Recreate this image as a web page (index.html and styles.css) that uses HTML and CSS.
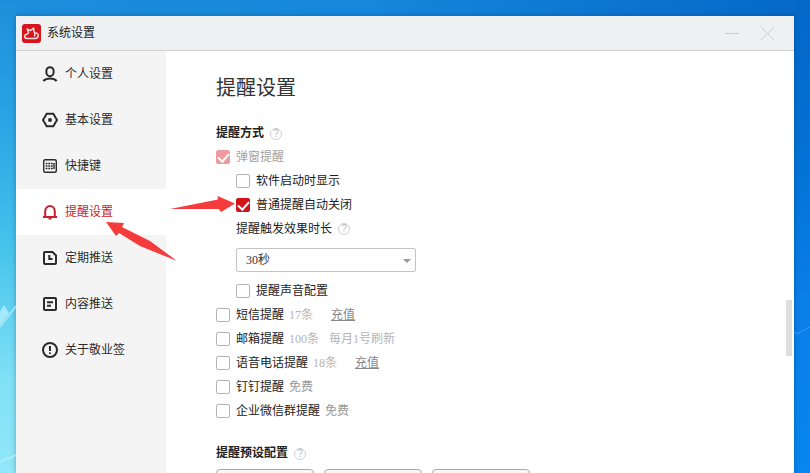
FILE: index.html
```html
<!DOCTYPE html>
<html lang="zh-CN">
<head>
  <meta charset="utf-8">
  <title>系统设置</title>
  <link rel="stylesheet" href="styles.css">
</head>
<body>

  <!-- Wallpaper details -->
  <svg class="streaks streaks-left" width="16" height="473" viewBox="0 0 16 473" aria-hidden="true">
    <path d="M0 312L4 305L9 313L0 325Z" fill="#b5effb" opacity=".8"/>
    <path d="M0 327L16 306M0 462L16 455" stroke="#c3f3fc" stroke-width="2" opacity=".6"/>
  </svg>
  <svg class="streaks streaks-right" width="16" height="473" viewBox="0 0 16 473" aria-hidden="true">
    <path d="M0 332L3 334L16 327" fill="none" stroke="#46aaf6" stroke-width="1" opacity=".7"/>
  </svg>

  <div class="window">
    <header class="titlebar">
      <svg class="logo" width="19" height="19" viewBox="0 0 19 19" aria-hidden="true">
        <rect width="19" height="19" rx="3" fill="#d5141c"/>
        <path d="M5 14.4C1.8 14.2 1.7 10.6 5 10.2L6.6 9L5.2 5L8.3 6.6L11.6 4.2L12.2 8C12.9 8.9 13 10 12.6 12M5 14.4H13.5C17.3 14 17 8.8 13.7 8.9" fill="none" stroke="#fbdcda" stroke-width="1.5" stroke-linecap="round" stroke-linejoin="round"/>
      </svg>
      <h1 class="app-name">系统设置</h1>
      <button class="win-btn" type="button" aria-label="最小化">
        <svg width="15" height="15" viewBox="0 0 15 15"><path d="M0 7.5H14"/></svg>
      </button>
      <button class="win-btn" type="button" aria-label="关闭">
        <svg width="15" height="15" viewBox="0 0 15 15"><path d="M1 1L14 14M14 1L1 14"/></svg>
      </button>
    </header>

    <div class="main">
      <!-- Sidebar -->
      <nav class="sidebar">
        <a class="nav-item" href="#profile">
          <svg class="icon" viewBox="0 0 16 16"><rect x="4.4" y="1.2" width="7.2" height="9" rx="3.6"/><path d="M1.3 15C4.5 11.6 11.5 11.6 14.7 15"/></svg>
          个人设置
        </a>
        <a class="nav-item" href="#basic">
          <svg class="icon" viewBox="0 0 16 16"><path d="M4.7 1.8H11.3L15 8L11.3 14.2H4.7L1 8Z"/><circle class="solid" cx="8" cy="8" r="2"/></svg>
          基本设置
        </a>
        <a class="nav-item" href="#hotkeys">
          <svg class="icon thin" viewBox="0 0 16 16"><rect x="1.7" y="1.7" width="12.6" height="12.6" rx="1.5"/><path d="M3.7 5.5H11M3.7 8H11M3.7 10.5H11" stroke-dasharray="1.8 .8"/><path d="M12 5V11"/></svg>
          快捷键
        </a>
        <a class="nav-item current" href="#remind" aria-current="page">
          <svg class="icon" viewBox="0 0 16 16"><path d="M3.2 13V7.5C3.2 .1 12.800 .1 12.800 7.5V13M1 13H15"/><path d="M6.5 14.500H9.500"/></svg>
          提醒设置
        </a>
        <a class="nav-item" href="#schedule">
          <svg class="icon" viewBox="0 0 16 16"><path d="M3 2H10.5L14 5.5V13Q14 14 13 14H3Q2 14 2 13V3Q2 2 3 2Z"/><path d="M7.3 5V9H10.5"/></svg>
          定期推送
        </a>
        <a class="nav-item" href="#push">
          <svg class="icon" viewBox="0 0 16 16"><rect x="2" y="2" width="12" height="12" rx="1"/><path d="M5 6.3H11M5 9.7H9"/></svg>
          内容推送
        </a>
        <a class="nav-item" href="#about">
          <svg class="icon" viewBox="0 0 16 16"><circle cx="8" cy="8" r="7"/><path d="M8 4V9M8 10.5V12"/></svg>
          关于敬业签
        </a>
      </nav>

      <!-- Settings -->
      <main class="content">
        <h2 class="page-title">提醒设置</h2>

        <h3 class="section-title">提醒方式 <span class="help">?</span></h3>
        <div class="row">
          <label class="option disabled"><input type="checkbox" checked disabled>弹窗提醒</label>
        </div>
        <div class="sub">
          <div class="row"><label class="option"><input type="checkbox">软件启动时显示</label></div>
          <div class="row"><label class="option"><input type="checkbox" checked>普通提醒自动关闭</label></div>
          <div class="row"><label for="duration">提醒触发效果时长</label><span class="help">?</span></div>
          <div class="select-box">
            <select id="duration">
              <option>30秒</option>
            </select>
          </div>
          <div class="row"><label class="option"><input type="checkbox">提醒声音配置</label></div>
        </div>
        <div class="row">
          <label class="option"><input type="checkbox">短信提醒</label>
          <span class="quota">17条</span>
          <a class="recharge" href="#sms">充值</a>
        </div>
        <div class="row">
          <label class="option"><input type="checkbox">邮箱提醒</label>
          <span class="quota">100条</span>
          <span class="note">每月1号刷新</span>
        </div>
        <div class="row">
          <label class="option"><input type="checkbox">语音电话提醒</label>
          <span class="quota">18条</span>
          <a class="recharge" href="#voice">充值</a>
        </div>
        <div class="row">
          <label class="option"><input type="checkbox">钉钉提醒</label>
          <span class="free">免费</span>
        </div>
        <div class="row">
          <label class="option"><input type="checkbox">企业微信群提醒</label>
          <span class="free">免费</span>
        </div>

        <h3 class="section-title">提醒预设配置 <span class="help">?</span></h3>
        <div class="presets">
          <button class="preset-btn" type="button" aria-label="预设一"></button>
          <button class="preset-btn" type="button" aria-label="预设二"></button>
          <button class="preset-btn" type="button" aria-label="预设三"></button>
        </div>
        <div class="thumb"></div>
      </main>
    </div>

    <!-- Pointer arrows -->
    <svg class="arrows" width="240" height="270" viewBox="0 0 240 270" aria-hidden="true">
      <path d="M170 209L218 199.500L217.500 196L235 203.500L221 212L219 209Z" fill="#f53b3b"/>
      <path d="M106 222L124 223L122 227L150 241L177 261L140 246L119 233L116 236Z" fill="#f53b3b"/>
    </svg>
  </div>

</body>
</html>
```
FILE: styles.css
```css
* { box-sizing: border-box; }

body {
  margin: 0;
  height: 100vh;
  padding: 16px 16px 0;
  overflow: hidden;
  position: relative;
  font: 12px/24px "Liberation Serif", "Noto Sans CJK SC", sans-serif;
  color: #222;
  background:
    linear-gradient(#1d8edb, #29a4e4 25%, #45c3ec 52%, #80e0f6 80%, #91e7f9) left / 16px 100% no-repeat,
    linear-gradient(#0468c8, #0370d4 30%, #0980e8 65%, #0885ef) right / 16px 100% no-repeat,
    linear-gradient(90deg, #1d8edb, #1587dc 45%, #0468c8);
}

h1, h2, h3 { margin: 0; }

.streaks       { position: absolute; top: 0; }
.streaks-left  { left: 0; }
.streaks-right { right: 0; }

.window {
  display: flex;
  flex-direction: column;
  height: 100%;
  background: #fff;
  box-shadow: 0 0 5px rgba(0, 40, 80, .35);
}

/* title bar */
.titlebar {
  display: flex;
  align-items: center;
  flex: none;
  height: 35px;
  padding: 0 19px 0 6px;
  gap: 6px;
  background: #eef0f2;
  border-bottom: 1px solid #cfd1d3;
}
.app-name { flex: 1; font-size: 12px; font-weight: 400; }
.win-btn {
  display: flex;
  width: 15px;
  height: 15px;
  margin-left: 14px;
  padding: 0;
  border: 0;
  background: none;
}
.win-btn svg { fill: none; stroke: #c9ccd1; stroke-width: 1; }

.main { display: flex; flex: 1; min-height: 0; }

/* sidebar */
.sidebar { flex: none; width: 150px; background: #f4f4f4; }
.nav-item {
  display: flex;
  align-items: center;
  gap: 7px;
  height: 46px;
  padding-left: 26px;
  color: #2b2b2b;
  text-decoration: none;
}
.nav-item.current { background: #fff; color: #c81e2d; }
.icon { width: 16px; height: 16px; fill: none; stroke: currentColor; stroke-width: 2; }
.icon.thin { stroke-width: 1.4; }
.icon .solid { fill: currentColor; stroke: none; }

/* settings */
.content {
  position: relative;
  flex: 1;
  padding: 22px 50px 0;
  overflow: hidden;
}
.page-title { font-size: 20px; line-height: 30px; font-weight: 400; color: #333; }
.section-title {
  display: flex;
  align-items: center;
  gap: 6px;
  margin-top: 19px;
  font-size: 12px;
  line-height: 23px;
}
.help {
  display: inline-flex;
  align-items: center;
  justify-content: center;
  width: 12px;
  height: 12px;
  border: 1px solid #d0d0d0;
  border-radius: 50%;
  font: 10px/10px "Liberation Sans", sans-serif;
  color: #bbb;
}
.row { display: flex; align-items: center; height: 24px; }
.row .help { margin-left: 6px; }
.sub { padding-left: 20px; }

.option { display: flex; align-items: center; gap: 6px; }
.option.disabled { color: #a3a3a3; }
.option input {
  appearance: none;
  width: 14px;
  height: 14px;
  margin: 0;
  border: 1px solid #b4b4b4;
  border-radius: 2px;
  background: #fff;
}
.option input:checked {
  display: flex;
  justify-content: center;
  border-color: #d3131b;
  background: #d3131b;
}
.option input:checked::before {
  content: "";
  width: 5px;
  height: 9px;
  border: solid #fff;
  border-width: 0 2px 2px 0;
  transform: rotate(42deg);
}
.option input:disabled { opacity: .42; }

.select-box {
  position: relative;
  width: 180px;
  margin: 7px 0;
}
.select-box select {
  display: block;
  appearance: none;
  width: 100%;
  height: 24px;
  padding: 0 9px;
  border: 1px solid #c4c4c4;
  border-radius: 2px;
  background: #fff;
  font: inherit;
  line-height: 20px;
  color: #333;
}
.select-box::after {
  content: "";
  position: absolute;
  right: 5px;
  top: 11px;
  border: 4px solid transparent;
  border-top-color: #999;
  border-bottom: 0;
  pointer-events: none;
}

.quota    { margin-left: 5px; color: #b5b5b5; }
.note     { margin-left: 10px; color: #b5b5b5; }
.free     { margin-left: 5px; color: #999; }
.recharge { margin-left: 18px; color: #888; }

.presets { display: flex; gap: 10px; margin-top: 4px; }
.preset-btn {
  width: 98px;
  height: 26px;
  border: 1px solid #aaa;
  border-radius: 4px;
  background: #f7f7f7;
}

/* scroll thumb over the pane */
.thumb {
  position: absolute;
  right: 2px;
  top: 249px;
  width: 6px;
  height: 56px;
  background: #dedede;
}

.arrows { position: absolute; left: 0; top: 0; pointer-events: none; }
```
